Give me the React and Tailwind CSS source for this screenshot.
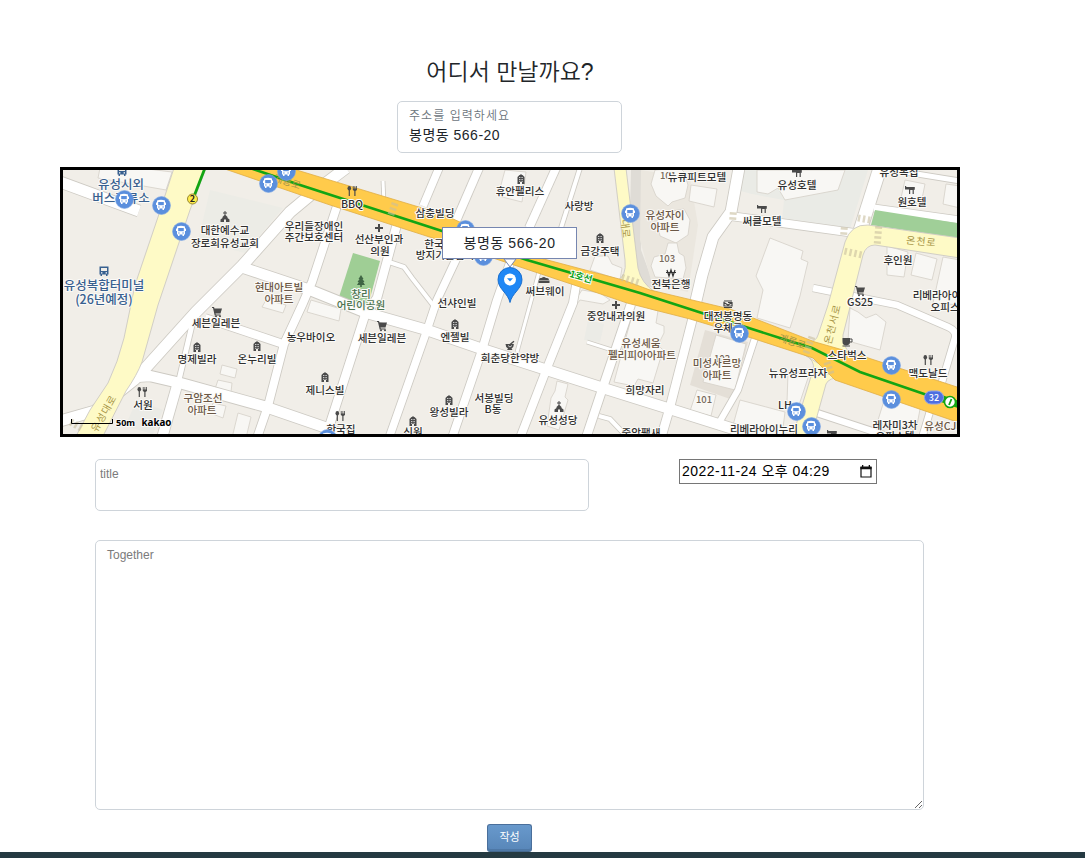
import React from "react";

const CASING = "#cdcac3";

// [points, width]
const roads = [
  ["M60 421 L95 411 L134 380 L142 372 L196 312 L242 266 L290 212 L314 192 L346 168", 11],
  ["M244 268 L262 274 L310 290 L367 313 L427 330 L485 350 L547 370 L603 388 L670 409 L740 431", 10.5],
  ["M134 377 L150 376 L180 383 L263 406 L327 428 L345 436", 10.5],
  ["M205 318 L283 344", 8],
  ["M192 325 L179 380", 5],
  ["M178 382 L162 438", 10],
  ["M338 203 L312 282 L303 303 L284 344 L268 406 L257 438", 8],
  ["M397 224 L377 298 L365 315 L330 424", 8.5],
  ["M383 181 L384 204", 3],
  ["M469 232 L437 300 L427 330 L389 438", 7.5],
  ["M386 261 L404 267 L412 278 L433 305", 4],
  ["M423 206 L439 168", 7.5],
  ["M453 228 L479 168", 8],
  ["M511 260 L497 300 L482 350 L452 438", 8],
  ["M577 280 L573 303 L547 368 L520 438", 8],
  ["M539 272 L517 352", 3],
  ["M631 304 L603 387 L586 438", 8.5],
  ["M693 317 L670 407 L661 438", 8.5],
  ["M755 338 L738 390 L716 428", 6],
  ["M587 342 L612 350", 3],
  ["M599 416 L610 419 L628 438", 4],
  ["M529 228 L556 168", 8],
  ["M561 228 L580 168", 4],
  ["M739 168 L731 212 L713 237 L702 275 L695 305", 11],
  ["M730 216 L760 220 L862 234", 8],
  ["M859 234 L880 168", 13],
  ["M874 208 L960 220", 7],
  ["M880 168 L960 181", 5],
  ["M813 288 L897 305 L948 327 Q957 331 955 338 L942 382", 6.5],
  ["M814 412 L890 437", 6.5],
  ["M931 408 L922 438", 6.5],
  ["M60 182 L139 211", 11],
];

const buildings = [
  "M100 168 L140 168 L172 172 L166 190 L98 178Z",
  "M757 170 L845 170 L838 190 L785 200 L778 188 L768 194 L757 192Z",
  "M770 238 L803 251 L801 259 L808 262 L806 270 L800 296 L790 328 L757 318 L763 290 L756 276Z",
  "M887 246 L908 252 L904 277 L887 275Z",
  "M916 253 L937 259 L932 280 L911 275Z",
  "M943 257 L960 260 L960 305 L933 303Z",
  "M905 180 L925 184 L921 204 L901 198Z",
  "M946 184 L960 186 L960 208 L943 204Z",
  "M655 170 L680 168 L684 172 L688 185 L685 198 L672 202 L668 206 L656 196 L651 184Z",
  "M656 214 L684 209 L690 220 L688 235 L676 243 L660 236Z",
  "M654 257 L665 254 L668 243 L677 243 L679 253 L684 256 L686 268 L683 279 L655 277 L651 266Z",
  "M691 185 L717 189 L714 207 L689 201Z",
  "M505 170 L526 172 L522 202 L498 196Z",
  "M595 256 L608 256 L612 264 L622 268 L620 280 L590 270Z",
  "M582 290 L600 293 L610 300 L603 304 L580 300 L574 308 L573 304Z",
  "M635 304 L658 311 L656 323 L664 326 L664 333 L658 345 L663 350 L653 383 L638 379 L634 386 L614 382Z",
  "M557 381 L568 384 L565 397 L568 400 L559 430 L547 426 L551 398 L555 391Z",
  "M697 390 L716 395 L711 416 L690 411Z",
  "M716 335 L746 344 L735 390 L703 382Z",
  "M850 308 L858 312 L866 318 L876 314 L886 322 L880 350 L848 341Z",
  "M740 400 L785 412 L782 436 L730 436Z",
  "M788 373 L810 372 L799 405 L787 402Z",
  "M888 388 L922 399 L916 430 L878 420Z",
  "M222 365 L237 369 L235 378 L220 374Z",
  "M218 380 L232 383 L231 392 L215 389Z",
  "M213 403 L226 406 L223 418 L210 413Z",
  "M238 413 L251 417 L246 438 L232 438Z",
  "M311 300 L341 309 L339 321 L307 312Z",
  "M266 300 L286 305 L283 313 L262 307Z",
];

const buses = [
  [124, 199], [161, 205], [181, 231], [268, 183], [286, 171], [465, 229], [483, 256],
  [630, 213], [739, 333], [891, 365], [891, 399], [796, 411], [811, 426], [327, 438],
];

const icons = [
  ["house", 521, 179], ["house", 600, 238], ["house", 197, 347], ["house", 257, 346],
  ["house", 455, 324], ["house", 325, 377], ["house", 449, 400], ["house", 413, 421],
  ["cart", 217, 312], ["cart", 382, 326], ["cart", 860, 291],
  ["fork", 352, 191], ["fork", 142, 392], ["fork", 340, 416], ["fork", 928, 360],
  ["church", 225, 217], ["church", 559, 407],
  ["cross", 379, 228], ["cross", 616, 305],
  ["hotel", 797, 173], ["hotel", 910, 190], ["hotel", 762, 209],
  ["mortar", 510, 346], ["cup", 847, 342],
  ["tree", 361, 281], ["sub", 544, 280], ["won", 671, 273], ["post", 728, 304],
  ["bus", 104, 271], ["bus", 122, 171], ["hotel", 832, 434],
];

// [text, centre x, baseline y, kind]
const labels = [
  ["유성시외", 121, 189, "blue"], ["버스정류소", 121, 203, "blue"],
  ["유성복합터미널", 104, 290, "blue"], ["(26년예정)", 104, 304, "blue"],
  ["대한예수교", 225, 234], ["장로회유성교회", 225, 247],
  ["우리들장애인", 314, 230], ["주간보호센터", 314, 241],
  ["BBQ", 352, 208], ["삼충빌딩", 435, 217], ["선산부인과", 379, 243], ["의원", 380, 255],
  ["한국", 434, 248], ["방지기술협회", 445, 259],
  ["현대아트빌", 279, 291, "brown"], ["아파트", 279, 303, "brown"],
  ["창리", 361, 298, "green"], ["어린이공원", 361, 309, "green"],
  ["선샤인빌", 457, 307], ["엔젤빌", 455, 341], ["세븐일레븐", 216, 327], ["세븐일레븐", 382, 342],
  ["농우바이오", 311, 341], ["명제빌라", 197, 363], ["온누리빌", 257, 363],
  ["제니스빌", 325, 394], ["서원", 143, 409], ["구암조선", 203, 402, "brown"], ["아파트", 202, 414, "brown"],
  ["한국집", 341, 433], ["왕성빌라", 449, 416], ["신원", 413, 436],
  ["서봉빌딩", 494, 402], ["B동", 493, 413], ["유성성당", 558, 424], ["회춘당한약방", 510, 362],
  ["휴안팰리스", 520, 195], ["사랑방", 579, 210], ["금강주택", 600, 255], ["써브웨이", 545, 295],
  ["101", 668, 179, "num"], ["뉴큐피트모텔", 697, 181], ["유성자이", 665, 219, "brown"], ["아파트", 665, 231, "brown"],
  ["103", 667, 262, "num"], ["전북은행", 671, 288], ["중앙내과의원", 616, 320],
  ["유성세움", 641, 347, "brown"], ["펠리피아아파트", 642, 359, "brown"], ["희망자리", 645, 394],
  ["중앙팰새", 641, 437], ["102", 722, 362, "num"], ["미성사르망", 717, 367, "brown"], ["아파트", 717, 379, "brown"], ["101", 704, 403, "num"],
  ["대전봉명동", 728, 320], ["우체국", 728, 332], ["뉴유성프라자", 798, 377], ["LH", 785, 409],
  ["리베라아이누리", 764, 433], ["레자미3차", 895, 429], ["오피스텔", 895, 440],
  ["유성CJ나인", 950, 430, "brown"], ["맥도날드", 928, 377], ["스타벅스", 847, 359], ["GS25", 860, 306],
  ["리베라아이", 937, 299], ["오피스텔", 950, 311], ["후인원", 898, 264], ["원호텔", 912, 206],
  ["유성복집", 899, 176], ["유성호텔", 797, 189], ["써클모텔", 762, 225],
];

const labelColor = { blue: "#38608f", brown: "#6b5846", green: "#4b7350", num: "#77695c", plain: "#2f2f2f" };

function Poi({ kind, x, y }) {
  const g = { transform: `translate(${x} ${y})`, fill: "#4a4a4a" };
  if (kind === "house")
    return (
      <g {...g}>
        <path d="M-3.5 5V-2L-1.5 -4H-.5V-5H.5V-4H1.5L3.5 -2V5H1V3H-1V5Z" />
        <path d="M-2 -1.5H2M-2 .5H2M-2 2.3H2" stroke="#eee" strokeWidth=".8" strokeDasharray="1 .6" />
      </g>
    );
  if (kind === "cart")
    return (
      <g {...g}>
        <path d="M-5 -5H-3L-2.5 -3.5H5L3.5 1.5H-1.5L-1.2 2.5H3.5V3.5H-2.3L-4 -4H-5Z" />
        <circle cx="-1" cy="4.3" r="1" />
        <circle cx="3" cy="4.3" r="1" />
      </g>
    );
  if (kind === "fork")
    return (
      <g {...g}>
        <ellipse cx="-2.7" cy="-2.8" rx="1.8" ry="2.2" />
        <path d="M-3.3 -1H-2.1V5H-3.3ZM.8 -5H1.6V-2.5H2.5V-5H3.3V-2.5H4.2V-5H5V-1L3.5 0V5H2.3V0L.8 -1Z" />
      </g>
    );
  if (kind === "church")
    return (
      <path {...g} d="M-.5 -6H.5V-4.5H2V-3.5H.5V-2L2.5 0V1L4.5 2.5V5H1V2.5H-1V5H-4.5V2.5L-2.5 1V0L-.5 -2V-3.5H-2V-4.5H-.5Z" />
    );
  if (kind === "cross") return <path {...g} d="M-1 -4H1V-1H4V1H1V4H-1V1H-4V-1H-1Z" />;
  if (kind === "hotel")
    return <path {...g} d="M-5 -4H-3.8V-3H4.8V-.2H3.8V4H2.6V0H.2V4H-1V-.5H-5Z" />;
  if (kind === "mortar")
    return (
      <g {...g}>
        <path d="M-4.5 -2H3.8Q4 1 1.5 2.5L2.5 4H-3L-2 2.5Q-4.5 1 -4.5 -2Z" />
        <path d="M0 -1.5L4 -4.8" stroke="#4a4a4a" strokeWidth="1.4" />
        <path d="M-2 -.5L0 1L2 -.5" fill="none" stroke="#eee" strokeWidth=".8" />
      </g>
    );
  if (kind === "cup")
    return (
      <g {...g}>
        <path d="M-4.5 -4H3V0Q3 3.2 -.8 3.2Q-4.5 3.2 -4.5 0ZM-4.5 3.6H3V4.6H-4.5Z" />
        <path d="M3 -3H5V0H2.5" fill="none" stroke="#4a4a4a" />
      </g>
    );
  if (kind === "tree")
    return <path {...g} fill="#3f6544" d="M0 -6L2.5 -2H1.5L3.5 1H2.2L4 4H.8V6H-.8V4H-4L-2.2 1H-3.5L-1.5 -2H-2.5Z" />;
  if (kind === "sub") return <path {...g} d="M-5.5 .5H5.5V3H-5.5ZM-5 0Q-5 -2.5 -2.5 -2Q0 -4 2 -2Q5 -2.5 5 0Z" />;
  if (kind === "won")
    return <path {...g} fill="none" stroke="#333" strokeWidth="1.2" d="M-4 -3L-2 3L0 -3L2 3L4 -3M-5 -.5H5" />;
  if (kind === "post")
    return <path {...g} fill="none" stroke="#444" strokeWidth="1.2" d="M-4 -3H4M0 -1.5H4V2H-4V-1.5L0 1L4 -1.5M-4 3.5H4" />;
  return (
    <g {...g} fill="#38608f">
      <path d="M-4.5 -4.5H4.5V3.5H3.5V5H2V3.5H-2V5H-3.5V3.5H-4.5Z" />
      <path d="M-3 -3H3V0H-3Z" fill="#f1eee8" />
      <path d="M-3 1.2H-1.6V2.4H-3ZM1.6 1.2H3V2.4H1.6Z" fill="#fff" />
    </g>
  );
}

function BusStop({ x, y }) {
  return (
    <g transform={`translate(${x} ${y})`}>
      <circle cx=".5" cy=".5" r="9" fill="#5b8fdd" stroke="#7fa7e4" strokeWidth=".6" />
      <path d="M-4 -4.5Q0 -6 4 -4.5V-2.5H5V0H4V3.5H3V5H1.5V3.5H-1.5V5H-3V3.5H-4V0H-5V-2.5H-4Z" fill="#fff" />
      <path d="M-2.8 -3H2.8V.2H-2.8Z" fill="#5b8fdd" />
      <path d="M-2.8 1.5H-1.4V2.6H-2.8ZM1.4 1.5H2.8V2.6H1.4Z" fill="#5b8fdd" />
    </g>
  );
}

function Crossing({ x, y, angle, n = 4, len = 7 }) {
  return (
    <g transform={`translate(${x} ${y}) rotate(${angle})`} fill="#c9bf9f" opacity=".6">
      {Array.from({ length: n }, (_, i) => (
        <rect key={i} x={-len / 2} y={(i - (n - 1) / 2) * 5 - 1.2} width={len} height="2.4" />
      ))}
    </g>
  );
}

function MapView() {
  return (
    <svg viewBox="63 170 894 264" width="894" height="264" className="block font-['Noto_Sans_CJK_KR',sans-serif]">
      <rect x="63" y="170" width="894" height="264" fill="#f1eee8" />
      <path d="M210 190 L283 208 L245 253 L198 241Z" fill="#ecece6" />
      <path d="M739 170 L868 170 L850 229 L782 220 L784 200 L752 194 L737 190Z" fill="#eaebe6" />
      <path d="M631 170 L641 170 L641 250 L655 288 L640 285 L630 215Z" fill="#dfdcd6" />
      <path d="M641 170 L690 178 L698 225 L688 292 L652 284 L640 240Z" fill="#ebe7df" />
      <path d="M705 330 L748 342 L733 400 L690 385Z" fill="#e4dfd7" />
      <path d="M588 320 L604 324 L600 342 L584 340Z M137 400 L163 410 L153 434 L125 426Z" fill="#ebebe6" />
      {buildings.map((d) => (
        <path key={d} d={d} fill="#f8f7f4" stroke="#d8d4cc" strokeWidth=".9" />
      ))}
      <path d="M353 253 L380 261 L368 306 L339 297Z" fill="#9fce95" />
      {roads.map(([d, w]) => (
        <path key={d} d={d} fill="none" stroke={CASING} strokeWidth={w + 1.7} strokeLinejoin="round" />
      ))}
      {roads.map(([d, w]) => (
        <path key={d} d={d} fill="none" stroke="#fff" strokeWidth={w} strokeLinejoin="round" />
      ))}
      <path d="M875 210 L957 223 L957 238 L871 225Z" fill="#a0cf98" />

      <g fill="#fefac6" stroke={CASING} strokeWidth=".9">
        <path d="M174 168 L158 217 L135 285 L124 338 Q118 362 108 383 L90 410 L75 438 L102 438 L126 391 Q137 375 142 362 L158 305 L190 210 L206 168Z" />
        <path d="M614 168 L625 260 Q627 277 616 281 L655 292 Q641 283 638 268 L626 168Z" />
        <path d="M960 238 L868 225 Q851 224 845 242 L828 305 L818 335 Q816 342 808 342 L850 353 Q842 345 843 335 L863 255 Q866 245 875 245 L960 258Z" />
        <path d="M803 354 Q816 360 813 370 L792 438 L811 438 L826 384 Q829 377 842 378Z" />
      </g>
      <path
        d="M222 168 L290 168 L442 214 L540 258 L623 280 L650 290 L730 309 L815 342 L850 352 L960 388 L960 423 L835 380 L813 358 L730 331 L690 319 L627 303 L580 287 L442 241 L330 205Z"
        fill="#ffcb4b"
        stroke="#e0ad45"
        strokeWidth=".8"
      />
      <g stroke="#13a513" fill="none">
        <path d="M250 168 L297 184 L442 231 L527 260 L640 293 L705 314 L780 338 L812 348 L860 372 L930 396 L960 405" strokeWidth="2.6" />
        <path d="M205 168 L193 199" strokeWidth="2.8" />
        <path d="M940 398 L960 405" strokeWidth="7" />
      </g>

      <Crossing x={393} y={209} angle={20} n={3} />
      <Crossing x={630} y={280} angle={108} />
      <Crossing x={853} y={253} angle={102} />
      <Crossing x={878} y={235} angle={5} />
      <Crossing x={864} y={219} angle={100} n={3} />
      <Crossing x={844} y={231} angle={5} n={2} />
      <Crossing x={733} y={216} angle={5} n={2} />
      <Crossing x={809} y={345} angle={20} />
      <Crossing x={829} y={368} angle={-20} n={3} />
      <Crossing x={76} y={425} angle={120} n={3} />

      <g fill="#a79547" fontSize="10" textAnchor="middle">
        <text transform="translate(107 415) rotate(-60)" letterSpacing="1">유성대로</text>
        <text transform="translate(286 185) rotate(18)">계룡로</text>
        <text transform="translate(622 229) rotate(84)">대로</text>
        <text transform="translate(791 345) rotate(18)">계룡로</text>
        <text transform="translate(836 325) rotate(-76)" letterSpacing="1">온천서로</text>
        <text transform="translate(921 245) rotate(6)" letterSpacing="1">온천로</text>
      </g>
      <text transform="translate(580 280) rotate(16)" textAnchor="middle" fontSize="9.5" fontWeight="700" fill="#12a31b" stroke="#fff" strokeWidth="2" paintOrder="stroke">
        1호선
      </text>

      {icons.map(([kind, x, y], i) => (
        <Poi key={i} kind={kind} x={x} y={y} />
      ))}
      {labels.map(([text, x, y, kind = "plain"], i) => (
        <text
          key={i}
          x={x}
          y={y}
          textAnchor="middle"
          fontSize={kind === "blue" ? 12.5 : kind === "num" ? 9.5 : 10.6}
          fontWeight="500"
          fill={labelColor[kind]}
          stroke="#fbfaf7"
          strokeWidth="2"
          strokeLinejoin="round"
          paintOrder="stroke"
        >
          {text}
        </text>
      ))}
      {buses.map(([x, y], i) => (
        <BusStop key={i} x={x} y={y} />
      ))}

      <circle cx="192.500" cy="199" r="5" fill="#ffec4a" stroke="#96882f" />
      <text x="192.500" y="202.300" textAnchor="middle" fontSize="9" fontWeight="700" fill="#222">2</text>
      <rect x="924.500" y="391" width="19" height="13" rx="6.500" fill="#4e6fe0" stroke="#8ca1ef" />
      <text x="934" y="401" textAnchor="middle" fontSize="9" fontWeight="500" fill="#fff">32</text>
      <circle cx="950" cy="402" r="5.500" fill="#fff" stroke="#13a513" strokeWidth="1.600" />
      <path d="M951.500 399L949 405" stroke="#13a513" strokeWidth="1.800" />

      <path d="M71.500 419V423.500H112.500V419" fill="none" stroke="#000" />
      <g fill="#000" fontFamily="Noto Sans, sans-serif" fontWeight="700" stroke="#fff" strokeWidth="1.500" paintOrder="stroke">
        <text x="116" y="426" fontSize="9.500" textLength="19" lengthAdjust="spacingAndGlyphs">50m</text>
        <text x="141.500" y="426" fontSize="11" textLength="30" lengthAdjust="spacingAndGlyphs">kakao</text>
      </g>

      <path d="M504 259L510 267L516 259Z" fill="#fff" stroke="#7686b0" />
      <path d="M510 302.500C508 293 498 289 498 279.500A12 12 0 0 1 522 279.500C522 289 512 293 510 302.500Z" fill="#1f87f5" stroke="#1268c8" strokeWidth=".9" />
      <circle cx="510" cy="279.500" r="6" fill="#fff" />
      <path d="M507 278.200H513L510 281.500Z" fill="#1f87f5" />
    </svg>
  );
}

export default function App() {
  return (
    <div className="flex h-[858px] w-[1085px] flex-col overflow-hidden bg-white font-['Liberation_Sans','Noto_Sans_CJK_KR',sans-serif] text-[#212529]">
      <main className="flex h-[852px] w-[1020px] shrink-0 flex-col items-center pt-[54px]">
        <h1 className="h-[47px] pt-px text-[23px] leading-[34px] font-[350] whitespace-nowrap">어디서 만날까요?</h1>

        <label className="mr-px flex h-[52px] w-[225px] shrink-0 flex-col rounded-[5px] border border-[#ced4da] px-[11px] pt-[5px]">
          <span className="text-[12px] leading-[18px] font-[350] tracking-[1.05px] text-[#6c757d]">주소를 입력하세요</span>
          <input defaultValue="봉명동 566-20" className="h-5 w-full bg-transparent text-[14px] leading-5 tracking-[0.5px] outline-none" />
        </label>

        <section className="relative mt-[14px] h-[270px] w-[900px] shrink-0 border-[3px] border-black">
          <MapView />
          <div className="absolute top-[57px] left-[379px] flex h-[32px] w-[135px] items-center justify-center border border-[#7686b0] bg-white text-[14px] tracking-[0.6px]">
            봉명동 566-20
          </div>
        </section>

        <div className="mt-[22px] flex h-[52px] w-[830px] shrink-0 items-start justify-between pr-[48px]">
          <input
            placeholder="title"
            className="h-[52px] w-[494px] rounded-[5px] border border-[#ced4da] px-1 pb-[22px] text-[12px] outline-none placeholder:text-[#7b7b7b]"
          />
          <div className="flex h-[25px] w-[198px] items-center justify-between border border-[#767676] pr-1 pl-[2px] text-[14px] text-black">
            <span className="tracking-[0.45px] whitespace-nowrap">2022-11-24 오후 04:29</span>
            <svg width="12" height="13" viewBox="0 0 12 13" className="mb-px">
              <path d="M1 2.500H11V12H1Z" fill="none" stroke="#111" strokeWidth="1.200" />
              <path d="M.4 1.500H11.600V4.300H.4ZM2 0H3.300V2H2ZM8.700 0H10V2H8.700Z" fill="#111" />
            </svg>
          </div>
        </div>

        <textarea
          placeholder="Together"
          className="mt-[29px] mr-px h-[270px] w-[829px] shrink-0 resize rounded-[5px] border border-[#ced4da] px-[11px] py-[5px] text-[12px] leading-[18px] outline-none placeholder:text-[#7b7b7b]"
        />

        <button className="mt-[14px] mr-px h-[28px] w-[45px] shrink-0 rounded-[3px] border border-[#4a6f9b] border-b-[#45698f] bg-linear-to-b from-[#6899cc] to-[#5886b8] pb-px text-[11px] leading-none text-white shadow-[inset_0_-2px_0_#4e78a6]">
          작성
        </button>
      </main>
      <footer className="h-[6px] w-full shrink-0 bg-[#253a42]" />
    </div>
  );
}
